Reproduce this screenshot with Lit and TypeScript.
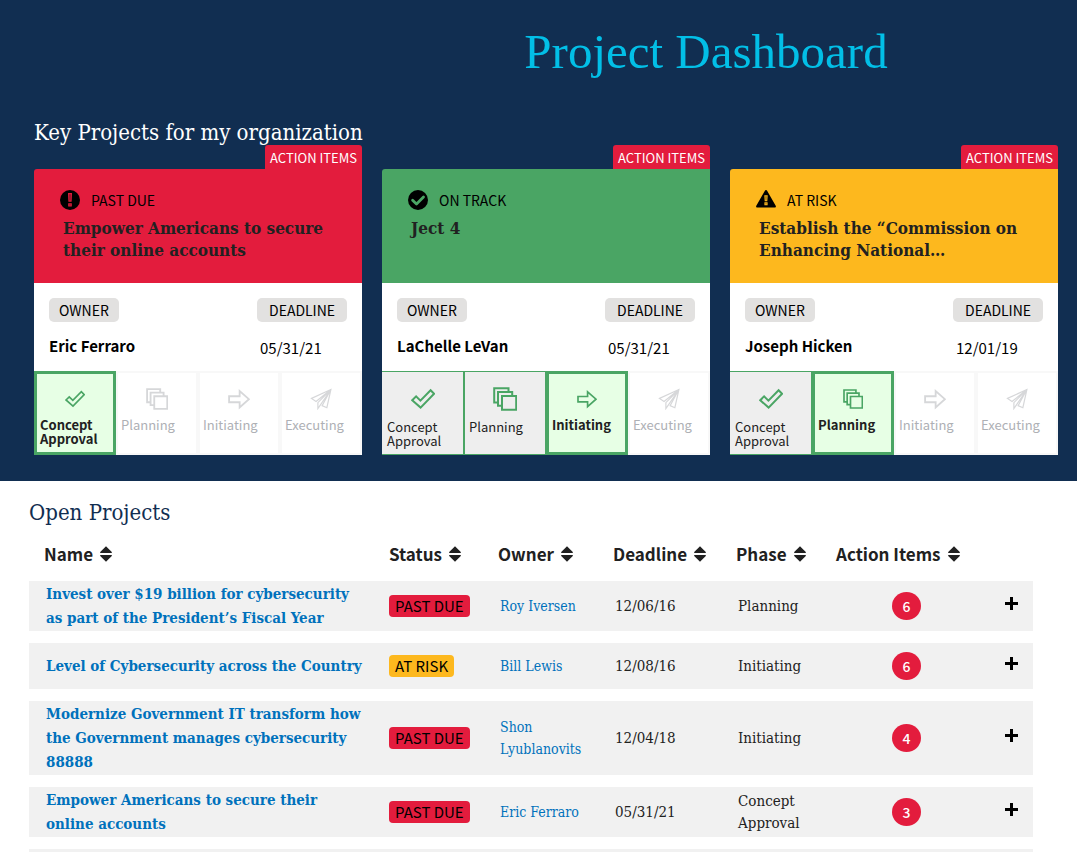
import { LitElement, html, css, svg, nothing } from "lit";
import { customElement, property } from "lit/decorators.js";

type Status = "past" | "track" | "risk";

interface KeyProject {
  status: Status;
  title: string;
  owner: string;
  deadline: string;
  phase: number;
}

interface OpenProject {
  name: string;
  status: Status;
  owner: string;
  deadline: string;
  phase: string;
  items: number;
}

const STATUS_LABEL: Record<Status, string> = {
  past: "PAST DUE",
  track: "ON TRACK",
  risk: "AT RISK",
};

const PHASES = ["Concept Approval", "Planning", "Initiating", "Executing"];

const KEY_PROJECTS: KeyProject[] = [
  { status: "past", title: "Empower Americans to secure their online accounts", owner: "Eric Ferraro", deadline: "05/31/21", phase: 0 },
  { status: "track", title: "Ject 4", owner: "LaChelle LeVan", deadline: "05/31/21", phase: 2 },
  { status: "risk", title: "Establish the “Commission on Enhancing National…", owner: "Joseph Hicken", deadline: "12/01/19", phase: 1 },
];

const OPEN_PROJECTS: OpenProject[] = [
  { name: "Invest over $19 billion for cybersecurity as part of the President’s Fiscal Year", status: "past", owner: "Roy Iversen", deadline: "12/06/16", phase: "Planning", items: 6 },
  { name: "Level of Cybersecurity across the Country", status: "risk", owner: "Bill Lewis", deadline: "12/08/16", phase: "Initiating", items: 6 },
  { name: "Modernize Government IT transform how the Government manages cybersecurity 88888", status: "past", owner: "Shon Lyublanovits", deadline: "12/04/18", phase: "Initiating", items: 4 },
  { name: "Empower Americans to secure their online accounts", status: "past", owner: "Eric Ferraro", deadline: "05/31/21", phase: "Concept Approval", items: 3 },
];

const COLUMNS = ["Name", "Status", "Owner", "Deadline", "Phase", "Action Items"];

const STATUS_ICONS: Record<Status, unknown> = {
  past: svg`<circle cx="10" cy="10" r="10" fill="#000"/>
    <path d="M8 3h4l-.4 8.800H8.400zM8.200 13.200h3.600v3.300H8.200z" fill="#e31c3d"/>
    <path d="M9.300 4.200h1.400l-.2 6.400h-1zM9.400 14.200h1.200v1.200H9.400z" fill="#000" opacity=".45"/>`,
  track: svg`<circle cx="10" cy="10" r="10" fill="#000"/>
    <path d="M4.600 10.200l3.900 3.800 7-7" fill="none" stroke="#4aa564" stroke-width="2.800" stroke-linecap="round" stroke-linejoin="round"/>`,
  risk: svg`<path d="M10 0c.5 0 .9.3 1.100.7l8.600 15c.5.9 0 1.700-.9 1.700H1.200c-.9 0-1.400-.8-.9-1.700L8.900.7C9.100.3 9.500 0 10 0z" fill="#000"/>
    <path d="M8.300 5.200h3.400l-.4 6H8.700zM8.400 12.300h3.200v2.900H8.400z" fill="#fdb81e"/>
    <path d="M9.400 6.200h1.200l-.2 4h-.8zM9.500 13.200h1v1h-1z" fill="#000" opacity=".5"/>`,
};

const PHASE_ICONS = [
  svg`<path d="M1.200 13.200l3.900-3.800 4.300 4.200L19.600 3.200l3.500 3.600L9.600 20.600z"/>`,
  svg`<path d="M5.500 15.500H1.200V1.200h14.300v3.300M9.300 18.700H5V5h14.200v3.800M9 9h14.200v13.800H9z"/>`,
  svg`<path d="M1.200 9h11.500V3.300L22.800 12.200 12.700 21.200v-5.700H1.200z"/>`,
  svg`<path stroke-width="1.300" d="M22.800 1.600L1.600 11.400l5 3.300L22.800 1.600 8.600 16v6.400l3-4.300L22.800 1.600l-9.600 17.600 5.200 2.300z"/>`,
];

@customElement("project-card")
export class ProjectCard extends LitElement {
  @property({ attribute: false }) project!: KeyProject;

  static styles = css`
    :host {
      display: flex;
      flex-direction: column;
      font-family: "Noto Sans CJK SC", "Open Sans", sans-serif;
      color: #000;
    }
    .tab {
      align-self: flex-end;
      box-sizing: border-box;
      height: 24px;
      padding: 0 5px;
      border-radius: 3px 3px 0 0;
      background: #e31c3d;
      color: #fff;
      font-size: 13px;
      line-height: 26px;
      text-decoration: none;
      white-space: nowrap;
    }
    .head {
      box-sizing: border-box;
      min-height: 114px;
      padding: 20px 26px;
      border-radius: 3px 0 0 0;
    }
    .past { background: #e31c3d; }
    .track { background: #4aa564; }
    .risk { background: #fdb81e; }
    .status {
      display: flex;
      align-items: center;
      gap: 11px;
      height: 22px;
      font-size: 14px;
      line-height: 22px;
    }
    .status svg { width: 20px; height: 20px; }
    .title {
      margin: 6px 0 0 3px;
      font: bold 17px/22px "DejaVu Serif Condensed", "DejaVu Serif", serif;
      color: #212121;
    }
    .body {
      display: grid;
      grid-template-columns: 1fr 90px;
      height: 88px;
      box-sizing: border-box;
      padding: 15px;
      background: #fff;
      margin: 0;
    }
    .field { display: flex; flex-direction: column; gap: 13px; align-items: flex-start; }
    dt {
      height: 24px;
      padding: 0 10px;
      border-radius: 5px;
      background: #e2e1e0;
      font-size: 14px;
      line-height: 24px;
    }
    .due dt { padding: 0 12px; }
    dd { margin: 0; font-size: 15px; line-height: 22px; }
    .who dd { font-weight: bold; }
    .due dd { padding: 2px 3px; }
    .phases {
      display: grid;
      grid-template-columns: repeat(4, 1fr);
      height: 84px;
      margin: 0;
      padding: 0;
      list-style: none;
      background: #fff;
    }
    .phase {
      box-sizing: border-box;
      display: flex;
      flex-direction: column;
      align-items: flex-start;
      gap: 5px;
      padding: 12px 3px 0;
      border: 2px solid #f8f8f8;
      color: #aeb0b5;
      font-size: 13px;
      line-height: 14px;
    }
    .phase svg {
      width: 24px;
      height: 24px;
      fill: none;
      stroke: #d6d7d9;
      stroke-width: 2;
    }
    .glyph { width: 100%; height: 28px; display: flex; align-items: center; justify-content: center; }
    .done {
      padding: 13px 4px 0;
      border: 1px solid #4aa564;
      background: #eee;
      color: #212121;
      gap: 7px;
    }
    .done:first-child { border-left-width: 0; padding-left: 5px; }
    .current {
      padding: 11px 3px 0;
      border: 3px solid #4aa564;
      background: #e7ffe5;
      color: #212121;
      font-weight: bold;
    }
    .done svg, .current svg { stroke: #4aa564; }
    .todo svg { width: 22px; height: 22px; }
    .current svg { width: 20px; height: 20px; }
  `;

  render() {
    const p = this.project;
    return html`
      <a class="tab" href="#">ACTION ITEMS</a>
      <div class="head ${p.status}">
        <div class="status"><svg viewBox="0 0 20 20" aria-hidden="true">${STATUS_ICONS[p.status]}</svg>${STATUS_LABEL[p.status]}</div>
        <h3 class="title">${p.title}</h3>
      </div>
      <dl class="body">
        <div class="field who"><dt>OWNER</dt><dd>${p.owner}</dd></div>
        <div class="field due"><dt>DEADLINE</dt><dd>${p.deadline}</dd></div>
      </dl>
      <ol class="phases">
        ${PHASES.map((name, i) => {
          const state = i < p.phase ? "done" : i === p.phase ? "current" : "todo";
          return html`<li class="phase ${state}" aria-current=${i === p.phase ? "step" : nothing}>
            <span class="glyph"><svg viewBox="0 0 24 24" aria-hidden="true">${PHASE_ICONS[i]}</svg></span>
            <span>${name}</span>
          </li>`;
        })}
      </ol>
    `;
  }
}

@customElement("app-root")
export class AppRoot extends LitElement {
  static styles = css`
    :host {
      display: block;
      height: 100vh;
      overflow: hidden;
      background: #fff;
      color: #212121;
      font-family: "DejaVu Serif Condensed", "DejaVu Serif", serif;
    }
    .hero {
      padding: 20px 19px 26px 34px;
      background: #112e51;
    }
    .page-title {
      margin: 0 0 36px 320px;
      color: #02bfe7;
      font-family: "Liberation Serif", serif;
      font-size: 49px;
      font-weight: normal;
      line-height: 64px;
      text-align: center;
    }
    .section-title {
      margin: 0;
      color: #fff;
      font-size: 22px;
      font-weight: normal;
      line-height: 25px;
    }
    .cards {
      display: grid;
      grid-template-columns: repeat(3, 1fr);
      gap: 20px;
    }
    .open { padding: 19px 44px 0 29px; }
    .open .section-title { color: #112e51; }
    table {
      width: 100%;
      table-layout: fixed;
      border-collapse: separate;
      border-spacing: 0 12px;
      font-size: 15px;
      line-height: 22px;
    }
    .c-status { width: 109px; }
    .c-owner { width: 115px; }
    .c-deadline { width: 123px; }
    .c-phase { width: 100px; }
    .c-items { width: 141px; }
    .c-more { width: 56px; }
    th { padding: 2px 0 0; height: 30px; text-align: left; }
    th:first-child { padding-left: 15px; }
    .sort {
      display: flex;
      align-items: center;
      gap: 7px;
      padding: 0;
      border: 0;
      background: none;
      color: #212121;
      font: bold 17px/24px "Noto Sans CJK SC", "Open Sans", sans-serif;
      white-space: nowrap;
    }
    .sort svg { width: 12px; height: 16px; fill: #212121; }
    td { box-sizing: border-box; height: 46px; padding: 1px 2px; background: #f1f1f1; }
    td:first-child { padding: 1px 22px 1px 17px; }
    td.s, td.n { padding-left: 0; }
    td.n { text-align: center; padding-right: 0; }
    td.m { text-align: center; padding: 0 0 2px 12px; }
    a { color: #0071bc; text-decoration: none; }
    .owner { font-size: 14px; }
    .name { display: block; font-size: 15px; font-weight: bold; line-height: 24px; }
    .badge {
      display: block;
      width: fit-content;
      padding: 0 6px;
      border-radius: 4px;
      background: #e31c3d;
      color: #000;
      font: 15px/22px "Noto Sans CJK SC", "Open Sans", sans-serif;
    }
    .badge.risk { background: #fdb81e; }
    .badge.track { background: #4aa564; }
    .count {
      display: block;
      width: 29px;
      height: 28px;
      margin: 0 auto;
      border-radius: 50%;
      background: #e31c3d;
      color: #fff;
      font: 500 14px/28px "Noto Sans CJK SC", "Open Sans", sans-serif;
    }
    .more { padding: 0; border: 0; background: none; line-height: 0; }
    .more svg { width: 13px; height: 13px; fill: #000; }
  `;

  render() {
    return html`
      <header class="hero">
        <h1 class="page-title">Project Dashboard</h1>
        <h2 class="section-title">Key Projects for my organization</h2>
        <div class="cards">
          ${KEY_PROJECTS.map((p) => html`<project-card .project=${p}></project-card>`)}
        </div>
      </header>
      <main class="open">
        <h2 class="section-title">Open Projects</h2>
        <table>
          <colgroup>
            <col /><col class="c-status" /><col class="c-owner" /><col class="c-deadline" />
            <col class="c-phase" /><col class="c-items" /><col class="c-more" />
          </colgroup>
          <thead>
            <tr>
              ${COLUMNS.map((c) => html`<th scope="col"><button class="sort" type="button">${c}<svg viewBox="0 0 12 16" aria-hidden="true"><path d="M6 0.200L11.800 6v1H.2V6zM.2 9h11.600v1L6 15.800.2 10z"/></svg></button></th>`)}
              <th></th>
            </tr>
          </thead>
          <tbody>
            ${OPEN_PROJECTS.map((p) => html`<tr>
              <td><a class="name" href="#">${p.name}</a></td>
              <td class="s"><span class="badge ${p.status}">${STATUS_LABEL[p.status]}</span></td>
              <td><a class="owner" href="#">${p.owner}</a></td>
              <td>${p.deadline}</td>
              <td>${p.phase}</td>
              <td class="n"><span class="count">${p.items}</span></td>
              <td class="m"><button class="more" type="button" aria-label="Show details"><svg viewBox="0 0 13 13" aria-hidden="true"><path d="M5 0h3v5h5v3H8v5H5V8H0V5h5z"/></svg></button></td>
            </tr>`)}
            <tr><td colspan="7"></td></tr>
          </tbody>
        </table>
      </main>
    `;
  }
}
